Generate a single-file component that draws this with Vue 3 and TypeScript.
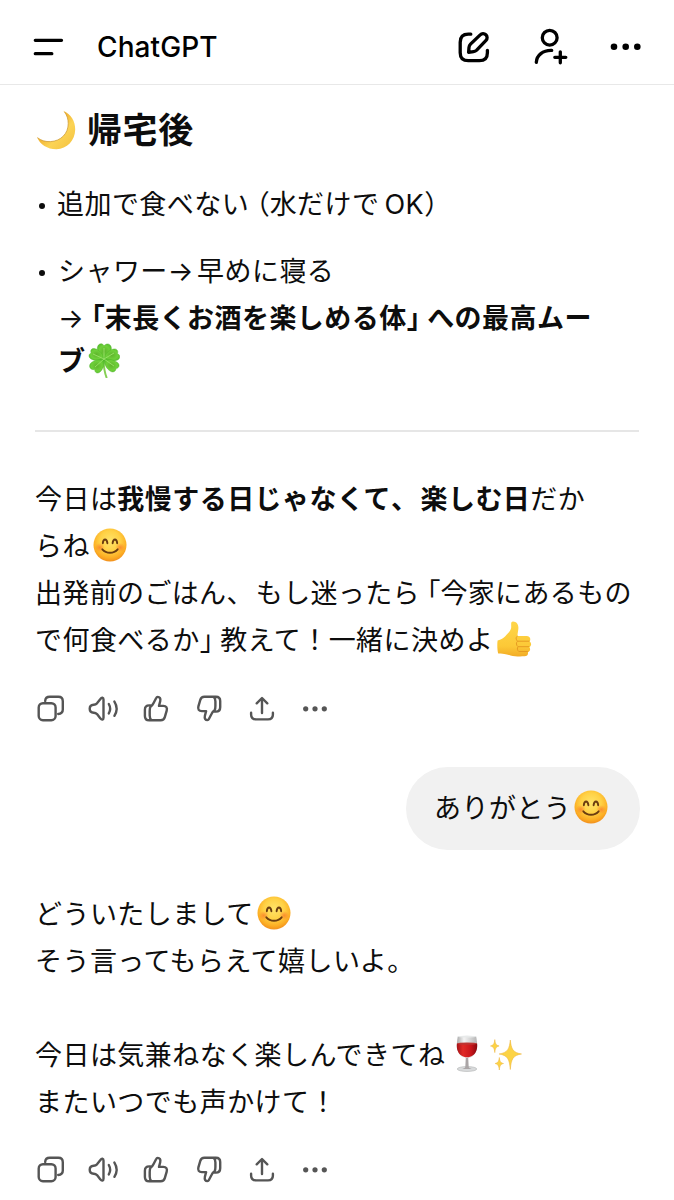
<script setup lang="ts">
import { defineComponent, h } from 'vue'

type EmojiName = 'moon' | 'clover' | 'smile' | 'thumb' | 'wine' | 'sparkles'

const shapes: Record<EmojiName, { box: string; body: string }> = {
  moon: {
    box: '0 0 40 40',
    body: `<defs><linearGradient id="mn" x1="0.2" y1="0.2" x2="0.9" y2="0.9"><stop offset="0.35" stop-color="#f3b93a"/><stop offset="0.6" stop-color="#fcd455"/><stop offset="1" stop-color="#f5c544"/></linearGradient></defs>
    <path d="M27.3.8C35 4 39.3 11.500 39.200 19.500 39 30.500 31 39 20.500 39.200 11.500 39.300 4 34.500 1 27.200c3.500 3 8.500 4.600 13.500 4.300C25 31 32.300 23.500 32.200 13.500 32.200 8.500 30.500 4 27.300.8Z" fill="url(#mn)"/>
    <path d="M1.500 27.700c3.500 2.900 8.300 4.200 13 3.900C25 31 32.300 23.500 32.200 13.500c0-4.400-1.200-8.300-3.700-11.400" fill="none" stroke="#c99532" stroke-width=".7"/>`,
  },
  clover: {
    box: '0 0 32 35',
    body: `<defs><radialGradient id="cl" cx=".5" cy=".5" r=".6"><stop offset="0" stop-color="#5fb52c"/><stop offset=".6" stop-color="#6fd03a"/><stop offset="1" stop-color="#55bd2c"/></radialGradient></defs>
    <path d="M15.500 17c.3 6 .4 11 3 17.300" fill="none" stroke="#86cf55" stroke-width="2" stroke-linecap="round"/>
    <g fill="url(#cl)" stroke="#48ae27" stroke-width=".4">
    <path d="M16 16C11 12 8.500 8 9.500 4 10.500.3 14.300-.3 16 2.800 18.500-.3 22.700.5 23.300 4.500 24 8.500 20.500 12.500 16 16Z"/>
    <path d="M16 16C16.500 11 21 7 25.500 6c3.500-.7 5 2 4 4.700 3 1 3 5 0 6.300-4 1.700-9 1-13.500-1Z"/>
    <path d="M16 16C11.500 17.800 7 18 3.500 16.200.2 14.500.2 11 3.200 10 1.800 7 4 4.800 7.200 5.800 11.500 7 15 11 16 16Z"/>
    <path d="M16 16c5.500-.2 11 1 13.800 3.800 2.500 2.500 1 5.500-1.800 5.700 0 3-3 4.300-5.500 2.800C18.500 26 16 21 16 16Z"/>
    <path d="M16 16c.8 5.500-1 10.500-4 13-2.800 2.300-5.500.3-5.300-2.500-3.500.8-6-2-4.800-5C3.500 17.800 10 16.500 16 16Z"/></g>
    <g fill="none" stroke="#9fe46f" stroke-width=".8"><path d="M16 16V5M16 16l10-6M16 16 5 11M16 16l10 7M16 16 7 24"/></g>`,
  },
  smile: {
    box: '0 0 34 34',
    body: `<defs><radialGradient id="sm" cx=".5" cy=".38" r=".62"><stop offset="0" stop-color="#ffe46a"/><stop offset=".5" stop-color="#ffd145"/><stop offset=".82" stop-color="#fcae24"/><stop offset="1" stop-color="#f2901d"/></radialGradient><radialGradient id="ck"><stop offset="0" stop-color="#fa7a2a" stop-opacity=".75"/><stop offset="1" stop-color="#fa7a2a" stop-opacity="0"/></radialGradient></defs>
    <circle cx="17" cy="17" r="16.500" fill="url(#sm)"/>
    <ellipse cx="6.800" cy="19.500" rx="5" ry="4.500" fill="url(#ck)"/><ellipse cx="27.200" cy="19.500" rx="5" ry="4.500" fill="url(#ck)"/>
    <path d="M9.800 15.200C10.300 10.200 13.800 10.200 14.400 15.200M19.600 15.200c.6-5 4.100-5 4.600 0" fill="none" stroke="#6b3d10" stroke-width="1.900" stroke-linecap="round"/>
    <path d="M9.300 21.300c4 4.600 11.400 4.600 15.400 0" fill="none" stroke="#6b3d10" stroke-width="1.800" stroke-linecap="round"/>`,
  },
  thumb: {
    box: '0 0 35 36',
    body: `<defs><linearGradient id="th" x1="0" y1="0" x2="0" y2="1"><stop offset="0" stop-color="#ffd64a"/><stop offset=".7" stop-color="#fcc937"/><stop offset="1" stop-color="#f2ac27"/></linearGradient></defs>
    <path d="M.6 19.500C4 18.500 6.500 17.500 8.500 15c2-2.500 5.500-5 5.700-8.500C14.300 3 13.500.6 16 .6c3.500 0 5.500 3 5.400 6.500-.1 3-.9 5.200-.9 7.900h9c3.500 0 4.800 3.200 3 5.500 2.300 1.500 2 4.500 0 5.700 1.300 2 .5 4.200-1.600 5 .6 2.300-.8 4-3.400 4.100-5 .2-10 .2-14-.9-3-.8-5-1.700-12.300-1.900C.3 29 0 23.500.6 19.500Z" fill="url(#th)"/>
    <path d="M20.500 15c-1.500.8-2 3 0 5.200h12M20.500 20.300c-1.500 1-1.500 4.200.6 5.400h11M21 25.800c-1 1-.8 3.800.8 4.700h9" fill="none" stroke="#e69a22" stroke-width="1"/>`,
  },
  wine: {
    box: '0 0 22 37',
    body: `<defs><linearGradient id="wn"><stop offset="0" stop-color="#a51318"/><stop offset=".3" stop-color="#e02a26"/><stop offset=".7" stop-color="#c9161b"/><stop offset="1" stop-color="#87090f"/></linearGradient><linearGradient id="gs"><stop offset="0" stop-color="#aaa"/><stop offset=".35" stop-color="#f3f3f3"/><stop offset="1" stop-color="#b5b5b5"/></linearGradient></defs>
    <ellipse cx="11" cy="34" rx="9.800" ry="2.500" fill="#d8dadb" stroke="#a8aaab" stroke-width=".5"/>
    <path d="M9.800 22.500h2.400l.5 9.500c.5 1 1.600 1.500 3 2h-9.400c1.400-.5 2.500-1 3-2Z" fill="#aaa5a6"/>
    <path d="M1.800 1.500h18.400c1.100 6.500 1.300 10.500.2 14-1.500 4.500-5 7.500-9.400 7.500s-7.900-3-9.400-7.500C.5 12 .7 8 1.800 1.500Z" fill="url(#gs)"/>
    <path d="M.9 8.500h20.200c.3 3 0 5.500-.9 7.500-1.600 3.900-5 6.300-9.200 6.300S3.400 19.900 1.800 16C.9 14 .6 11.500.9 8.500Z" fill="url(#wn)"/>
    <ellipse cx="11" cy="8.600" rx="10" ry="1.200" fill="#bd3532"/><ellipse cx="11" cy="1.600" rx="9.200" ry="1" fill="#e8eaea"/>`,
  },
  sparkles: {
    box: '0 0 32 32',
    body: `<g fill="#fcd345" stroke="#edb035" stroke-width=".5" stroke-linejoin="round"><path d="M20.300 1c1 9 2.500 12.500 11.200 14-8.700 1.500-10.200 5-11.200 15.500-1-10.500-2.500-14-11.200-15.500 8.700-1.500 10.200-5 11.200-14Z"/><path d="M4.800.6c.5 4.200 1.300 5.600 4.300 6.400-3 .8-3.800 2.300-4.300 6.600C4.300 9.300 3.500 7.800.5 7 3.500 6.200 4.300 4.800 4.800.6Z"/><path d="M9.300 18.500c.5 4 1.200 5.200 4.200 6-3 .8-3.700 2.300-4.200 6.500-.5-4.200-1.200-5.700-4.200-6.500 3-.8 3.700-2 4.200-6Z"/></g>`,
  },
}

const Emoji = defineComponent({
  props: { name: { type: String, required: true } },
  setup(props) {
    return () => {
      const shape = shapes[props.name as EmojiName]
      return h('svg', { viewBox: shape.box, class: ['emoji', props.name], innerHTML: shape.body })
    }
  },
})

const actionRows = ['first', 'second']

const thumbPath =
  'M150.500 705.400H149.200Q144.900 705.400 144.900 709.700V716Q144.900 720.300 149.200 720.300H160.700Q163.900 720.300 164.800 717.200L166.700 710.600C167.500 707.700 166.200 705.900 163.300 705.900H159L160.200 701.200C160.900 698.300 159.600 696.900 157.700 696.900Q156.700 696.900 156.200 698L153.600 703Q152.500 705.400 150.500 706.700Q149.700 708 149.700 711V715.500Q149.700 718.800 151.500 720.200'
</script>

<template>
  <div class="screen">
    <header class="topbar">
      <svg class="menu" viewBox="32 32 34 30"><path d="M35.300 40.300H61.500M35.300 53.700H51.800" /></svg>
      <h1>ChatGPT</h1>
      <div class="tools">
        <svg class="compose" viewBox="455 27 40 40">
          <path d="M470.800 34.200H468.300Q460.200 34.200 460.200 42.300V52.700Q460.200 60.700 468.300 60.700H479.400Q487.400 60.700 487.400 52.700V50.300" />
          <path d="M468.600 52.300 469 47.400Q469.200 45.500 470.500 44.200L480.200 34.900A3.900 3.900 0 0 1 486 40.400L476.700 50.200Q475.400 51.500 473.500 51.700Z" />
        </svg>
        <svg class="invite" viewBox="530 27 40 40">
          <circle cx="549.700" cy="37.700" r="7.400" />
          <path d="M536.300 62.400C536.600 55.200 543 50.100 551.700 50.400M554.800 57.300H565.800M560.300 51.800V62.800" />
        </svg>
        <svg class="more" viewBox="606 27 40 40">
          <circle cx="614" cy="46.700" r="3.300" /><circle cx="625.700" cy="46.700" r="3.300" /><circle cx="637.300" cy="46.700" r="3.300" />
        </svg>
      </div>
    </header>

    <main>
      <h2><Emoji name="moon" /><span>帰宅後</span></h2>

      <ul>
        <li class="item-one"><div class="line">追加で食べない<span class="open">（</span>水だけで<span class="latin">OK</span><span class="close">）</span></div></li>
        <li class="item-two">
          <div class="line">シャワー<span class="arrow">→</span>早めに寝る</div>
          <div class="line"><span>→</span><b><span class="open">「</span>末長くお酒を楽しめる体<span class="close">」</span>への最高ムー</b></div>
          <div class="line tail"><b>ブ</b><Emoji name="clover" /></div>
        </li>
      </ul>

      <hr />

      <section class="reply">
        <div class="line">今日は<b>我慢する日じゃなくて<span class="comma">、</span>楽しむ日</b>だか</div>
        <div class="line">らね<Emoji name="smile" /></div>
        <div class="line tight">出発前のごはん<span class="comma">、</span>もし迷ったら<span class="open">「</span>今家にあるもの</div>
        <div class="line">で何食べるか<span class="close">」</span>教えて！一緒に決めよ<Emoji name="thumb" /></div>
      </section>

      <template v-for="row in actionRows" :key="row">
        <template v-if="row === 'second'">
          <div class="bubble">ありがとう<Emoji name="smile" /></div>
          <section class="thanks">
            <div class="line">どういたしまして<Emoji name="smile" /></div>
            <div class="line">そう言ってもらえて嬉しいよ。</div>
            <div class="line gap">今日は気兼ねなく楽しんできてね<Emoji name="wine" /><Emoji name="sparkles" /></div>
            <div class="line">またいつでも声かけて！</div>
          </section>
        </template>
        <svg class="actions" :class="row" viewBox="35 692 300 34">
          <rect x="38.700" y="703.200" width="16.900" height="17" rx="4.200" />
          <path d="M45.200 701V700.800Q45.400 696.800 49.800 696.800H58.400Q62.800 696.800 62.800 701.200V709.600Q62.800 713.800 58.200 714" />
          <path d="M93.700 704.700Q95.700 704.500 97 703.300L100.400 699C101.700 697.200 103.500 697.400 103.500 699.600V717.800C103.500 720 101.700 720.200 100.400 718.400L97 714.100Q95.700 712.900 93.700 712.700Q89.700 712.300 89.700 708.700T93.700 704.700Z" />
          <path d="M108.800 704Q111.500 708.700 108.800 713.400M114.400 701.600Q118.900 708.700 114.400 715.800" />
          <path :d="thumbPath" />
          <path :d="thumbPath" transform="translate(53.300 0) rotate(180 155.900 708.500)" />
          <path d="M262 713V698.200M256.700 703.300 262 698 267.300 703.300M251.100 712.700V714.500Q251.100 719.400 256 719.400H268Q272.900 719.400 272.900 714.500V712.700" />
          <g class="dots"><circle cx="305.700" cy="708.800" r="2.600" /><circle cx="315" cy="708.800" r="2.600" /><circle cx="324.300" cy="708.800" r="2.600" /></g>
        </svg>
      </template>
    </main>
  </div>
</template>

<style>
body { background: #fff; overflow: hidden; }
svg.emoji { flex: none; display: block; margin-bottom: 4px; }
svg.emoji.moon { width: 40px; height: 40px; margin: 0 11px 1px 1px; }
svg.emoji.clover { width: 32px; height: 35px; margin-left: 3px; margin-bottom: 3px; }
svg.emoji.smile { width: 34px; height: 34px; margin-left: 3px; }
svg.emoji.thumb { width: 35px; height: 36px; margin-left: 4px; margin-bottom: 3px; }
svg.emoji.wine { width: 22px; height: 37px; margin-left: 11px; }
svg.emoji.sparkles { width: 32px; height: 32px; margin-left: 12px; margin-bottom: 2px; }
</style>

<style scoped>
.screen {
  width: 674px;
  height: 1200px;
  overflow: hidden;
  background: #fff;
  color: #0d0d0d;
  font-family: Inter, "Noto Sans CJK JP", sans-serif;
  font-size: 27px;
  line-height: 47px;
  letter-spacing: 0.45px;
  text-spacing-trim: space-all;
}
.topbar {
  box-sizing: border-box;
  height: 85px;
  border-bottom: 1px solid #e8e8e8;
  display: flex;
  align-items: center;
  padding: 10px 28px 0 32px;
}
.topbar svg { fill: none; stroke: #000; stroke-width: 3.3; stroke-linecap: round; stroke-linejoin: round; }
.menu { width: 34px; height: 30px; }
h1 { margin: 1px 0 0 31px; font-size: 28px; font-weight: 500; letter-spacing: 0.1px; color: #000; }
.tools { margin-left: auto; display: flex; }
.tools svg { width: 40px; height: 40px; }
.invite { margin-left: 35px; }
.more { margin-left: 36px; }
.topbar .more { fill: #000; stroke: none; }
main { padding: 0 34px 0 35px; }
h2 { height: 50px; margin: 20px 0 0; display: flex; align-items: center; font-size: 35px; letter-spacing: 0.6px; font-weight: 700; }
ul { list-style: none; margin: 0; padding: 26px 0 0 22px; }
li { position: relative; }
li::before { content: ""; position: absolute; width: 6px; height: 6px; border-radius: 50%; background: #0d0d0d; left: -18.5px; top: 22px; }
.item-two { margin-top: 20px; }
.item-two .line { padding-left: 1px; }
.line { height: 47px; display: flex; align-items: center; white-space: pre; }
.line b { font-weight: 700; display: flex; }
.line.tail { height: 39px; }
.tight { letter-spacing: 0.35px; }
.open, .close { font-feature-settings: "halt"; letter-spacing: 0; }
.open { margin-left: 7px; }
.close { margin-right: 7px; }
.latin { margin-left: 5px; }
.comma { margin-right: 2px; }
.arrow { margin-right: 3px; }
hr { border: 0; height: 2px; background: #e6e6e6; margin: 49px 0 0; width: 604px; }
.reply { padding-top: 44px; }
.actions { display: block; width: 300px; height: 34px; fill: none; stroke: #555; stroke-width: 2.4; stroke-linecap: round; stroke-linejoin: round; }
.actions.first { margin-top: 28px; }
.actions.second { margin-top: 27px; }
.dots { fill: #555; stroke: none; }
.bubble {
  box-sizing: border-box;
  width: 234px;
  height: 83px;
  margin: 41px 0 0 auto;
  border-radius: 42px;
  background: #f1f1f1;
  display: flex;
  align-items: center;
  padding-left: 28px;
}
.thanks { padding-top: 41px; }
.gap { margin-top: 47px; }
</style>
